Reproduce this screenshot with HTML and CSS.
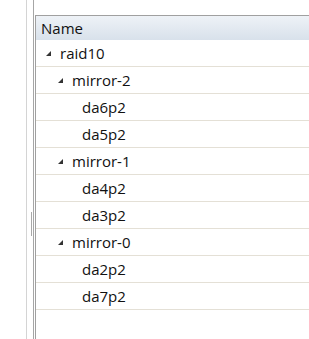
FILE: index.html
```html
<!DOCTYPE html>
<html>
<head>
<meta charset="utf-8">
<link rel="stylesheet" href="styles.css">
</head>
<body>
<div class="app">
  <div class="left-pane"></div>
  <div class="splitter"><div class="grip"></div></div>
  <div class="main">
    <div class="grid">
      <div class="header">Name</div>
      <div class="row"><span class="toggle l0"><svg width="5" height="5" viewBox="0 0 5 5"><polygon points="5,0 5,5 0,5"/></svg></span><span class="label">raid10</span></div>
      <div class="row"><span class="toggle l1"><svg width="5" height="5" viewBox="0 0 5 5"><polygon points="5,0 5,5 0,5"/></svg></span><span class="label">mirror-2</span></div>
      <div class="row"><span class="leaf">da6p2</span></div>
      <div class="row"><span class="leaf">da5p2</span></div>
      <div class="row"><span class="toggle l1"><svg width="5" height="5" viewBox="0 0 5 5"><polygon points="5,0 5,5 0,5"/></svg></span><span class="label">mirror-1</span></div>
      <div class="row"><span class="leaf">da4p2</span></div>
      <div class="row"><span class="leaf">da3p2</span></div>
      <div class="row"><span class="toggle l1"><svg width="5" height="5" viewBox="0 0 5 5"><polygon points="5,0 5,5 0,5"/></svg></span><span class="label">mirror-0</span></div>
      <div class="row"><span class="leaf">da2p2</span></div>
      <div class="row"><span class="leaf">da7p2</span></div>
    </div>
  </div>
</div>
</body>
</html>
```
FILE: styles.css
```css
html, body {
  margin: 0;
  padding: 0;
  background: #fff;
  height: 100%;
  overflow: hidden;
}
body {
  font-family: "Open Sans", "Noto Sans", "DejaVu Sans", sans-serif;
  font-size: 15px;
  color: #111;
}
.app {
  display: flex;
  height: 339px;
}
.left-pane {
  width: 26px;
  border-right: 1px solid #d4d4d4;
  flex: none;
}
.splitter {
  flex: none;
  border-right: 1px solid #a6a6a6;
  display: flex;
  justify-content: flex-end;
  padding-right: 1px;
  box-sizing: border-box;
  width: 7px;
}
.grip {
  width: 1px;
  height: 24px;
  margin-top: 212px;
  background: #a8a8a8;
}
.main {
  flex: 1;
  padding-top: 15px;
  padding-left: 1px;
  min-width: 0;
}
.grid {
  border-left: 1px solid #a0a0a0;
  border-top: 1px solid #a0a0a0;
  height: 100%;
  box-sizing: border-box;
}
.header {
  height: 24px;
  line-height: 24px;
  padding-left: 5px;
  background: linear-gradient(#eef2f7, #d8e1eb);
}
.row {
  height: 26px;
  border-bottom: 1px solid #e4e0d6;
  display: flex;
  align-items: center;
}
.toggle {
  width: 14px;
  display: flex;
  align-items: center;
  flex: none;
}
.toggle svg {
  fill: #333;
  display: block;
}
.toggle.l0 { margin-left: 10px; }
.toggle.l1 { margin-left: 22px; }
.label {
  line-height: 26px;
}
.leaf {
  margin-left: 46px;
  line-height: 26px;
}
```
